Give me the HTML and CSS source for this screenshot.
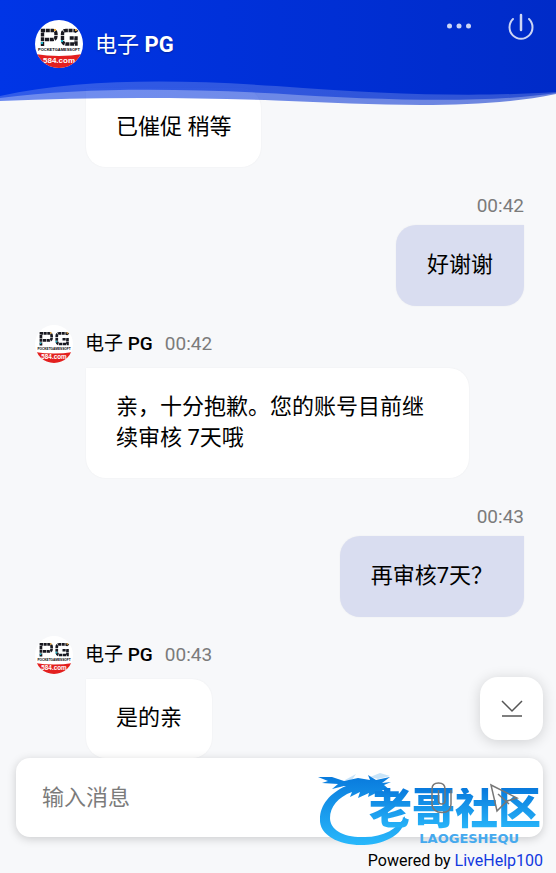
FILE: index.html
```
<!DOCTYPE html>
<html lang="zh-CN">
  <head>
    <meta charset="UTF-8" />
    <meta name="viewport" content="width=device-width, initial-scale=1.0" />
    <title>电子 PG</title>
    <link rel="stylesheet" href="styles.css">
  </head>
  <body>
    <svg class="defs" aria-hidden="true">
      <symbol id="logo" viewBox="0 0 48 48">
        <rect width="48" height="48" fill="#fff" />
        <path d="M0 34Q24 38 48 34V48H0z" fill="#e3201f" />
        <g fill="none" stroke="#181820" stroke-width="3.4" stroke-dasharray="4 0.7">
          <path d="M7.500 26V10.500H18Q21 10.500 21 14V16Q21 19.500 18 19.500H9" />
          <path d="M42 12Q41 10.500 38 10.500H31Q27.500 10.500 27.500 14V20Q27.500 24 31 24H41V18H34" />
        </g>
        <path d="M6 22h2v2H6zM26 20h2v2h-2z" fill="#1cb5c9" />
        <path d="M19 9h2v2h-2zM40 9h2v2h-2z" fill="#e8a43a" />
        <text x="24" y="31" class="logo-tag">POCKETGAMESSOFT</text>
        <text x="24" y="43" class="logo-site">584.com</text>
      </symbol>
    </svg>

    <div class="chat">
      <header class="header">
        <div class="brand">
          <svg class="avatar avatar-big"><use href="#logo" /></svg>
          <h1>电子 <b>PG</b></h1>
        </div>
        <button class="icon-btn" type="button" aria-label="更多">
          <svg width="28" height="28" viewBox="0 0 28 28" fill="currentColor">
            <circle cx="4.500" cy="14" r="2.500" />
            <circle cx="14" cy="14" r="2.500" />
            <circle cx="23.500" cy="14" r="2.500" />
          </svg>
        </button>
        <button class="icon-btn" type="button" aria-label="结束">
          <svg width="28" height="28" viewBox="0 0 28 28" fill="none" stroke="currentColor" stroke-width="2" stroke-linecap="round">
            <path d="M6 7A11.500 11.500 0 1 0 22 7" />
            <path d="M14 3V18" stroke-width="2.500" />
          </svg>
        </button>
        <svg class="wave" viewBox="0 0 556 26" preserveAspectRatio="none" aria-hidden="true">
          <defs>
            <linearGradient id="blue" gradientUnits="userSpaceOnUse" x1="0" y1="0" x2="556" y2="0">
              <stop offset="0" stop-color="#0035e6" />
              <stop offset="1" stop-color="#002bc8" />
            </linearGradient>
          </defs>
          <g fill="url(#blue)">
            <path opacity=".56" d="M0 0H556V14C480 30 380 25 276 20.500C180 17 90 17 0 21z" />
            <path opacity=".56" d="M0 0H556V13C490 23 390 21 276 13.500C170 8 80 8 0 18z" />
            <path d="M0 0H556V12C480 17 390 15 276 6C170 -1 80 -1 0 16z" />
          </g>
        </svg>
      </header>

      <main class="log">
        <div class="msg">
          <p class="bubble">已催促 稍等</p>
        </div>
        <div class="msg mine">
          <time>00:42</time>
          <p class="bubble">好谢谢</p>
        </div>
        <div class="msg">
          <div class="who">
            <svg class="avatar"><use href="#logo" /></svg>
            <span class="name">电子 <b>PG</b></span>
            <time>00:42</time>
          </div>
          <p class="bubble">亲，十分抱歉。您的账号目前继续审核 7天哦</p>
        </div>
        <div class="msg mine">
          <time>00:43</time>
          <p class="bubble">再审核7天？</p>
        </div>
        <div class="msg">
          <div class="who">
            <svg class="avatar"><use href="#logo" /></svg>
            <span class="name">电子 <b>PG</b></span>
            <time>00:43</time>
          </div>
          <p class="bubble">是的亲</p>
        </div>
      </main>

      <form class="composer">
        <input type="text" placeholder="输入消息" aria-label="输入消息" />
        <button class="tool" type="button" aria-label="附件">
          <svg width="32" height="34" viewBox="0 0 32 34">
            <path d="M24 9V23C24 28 21 31.500 15 31.500S5 28 5 23V8C5 4 7.500 2 11.500 2S18 4 18 8V20C18 24 11.500 24 11.500 20V9" />
          </svg>
        </button>
        <button class="tool" type="submit" aria-label="发送">
          <svg width="32" height="34" viewBox="0 0 32 34">
            <path d="M2 4L28 17L18 20L8 30z" />
            <path d="M9 13L20 23" />
          </svg>
        </button>
        <button class="to-bottom" type="button" aria-label="最新消息">
          <svg width="24" height="24" viewBox="0 0 24 24" fill="none" stroke="currentColor" stroke-width="1.500">
            <path d="M2 4L12 14L22 4M2 19H22" />
          </svg>
        </button>
        <div class="stamp">
          <svg width="94" height="80" viewBox="0 0 94 80" aria-hidden="true">
            <defs>
              <linearGradient id="sky" x1="0" y1="0" x2="0" y2="1">
                <stop offset="0" stop-color="#0879dc" />
                <stop offset="1" stop-color="#29b8fb" />
              </linearGradient>
            </defs>
            <path fill="url(#sky)" d="M28 18C12 25 2 37 2 51C1 68 23 78 46 77C69 76 88 65 87 48C80 61 65 69 47 69C26 70 12 62 12 50C12 39 20 29 34 24L32 29L42 24L40 30L51 25L50 29L58 25L68 27L64 22L72 22L66 17L73 14L64 15L72 9L58 12L50 7L52 12L40 10L26 13L14 9L0 9L10 13L4 15L20 16L14 21L26 18z" />
            <path fill="#4aa7ec" d="M27 12L38 6L34 12zM52 9L62 5L72 8L60 11z" opacity=".3" />
          </svg>
          <strong>老哥社区</strong>
          <small>LAOGESHEQU</small>
        </div>
      </form>

      <footer class="footer">Powered by <a href="#">LiveHelp100</a></footer>
    </div>
  </body>
</html>
```
FILE: styles.css
```
* {
  box-sizing: border-box;
  margin: 0;
  padding: 0;
}
body {
  font-family: Roboto, "Noto Sans CJK SC", sans-serif;
  font-size: 22px;
  line-height: 31px;
  color: #000;
  background: #f7f8fa;
}
button {
  border: 0;
  background: none;
  cursor: pointer;
}
svg {
  display: block;
}
.defs {
  position: absolute;
  width: 0;
  height: 0;
}
.chat {
  display: flex;
  flex-direction: column;
  height: 100vh;
}

/* header */
.header {
  position: relative;
  z-index: 1;
  display: flex;
  align-items: flex-start;
  gap: 34px;
  flex: none;
  height: 80px;
  padding: 12px 21px 0 35px;
  color: #fff;
  background: linear-gradient(90deg, #0035e6, #002bc8);
}
.brand {
  display: flex;
  align-items: center;
  gap: 12px;
  margin-top: 8px;
  margin-right: auto;
}
.brand h1 {
  font-size: 22px;
  font-weight: 400;
  text-shadow: 0 1px 2px rgba(0, 0, 0, 0.3);
}
.icon-btn {
  width: 28px;
  height: 28px;
  color: rgba(255, 255, 255, 0.8);
}
.wave {
  position: absolute;
  left: 0;
  top: 100%;
  width: 100%;
  height: 26px;
}
.avatar {
  flex: none;
  width: 38px;
  height: 38px;
  border-radius: 50%;
}
.avatar-big {
  width: 48px;
  height: 48px;
}
.logo-tag,
.logo-site {
  font-family: "Liberation Sans", sans-serif;
  font-size: 4px;
  font-weight: 700;
  text-anchor: middle;
}
.logo-site {
  font-size: 8px;
  fill: #fff;
}

/* messages */
.log {
  display: flex;
  flex-direction: column;
  justify-content: flex-end;
  flex: 1;
  min-height: 0;
  padding: 0 32px 0 35px;
  overflow: hidden;
}
.msg {
  display: flex;
  flex-direction: column;
  align-items: flex-start;
  gap: 5px;
  padding-left: 51px;
}
.mine {
  align-items: flex-end;
  gap: 7px;
  margin: 27px 0 19px;
}
.who {
  display: flex;
  align-items: center;
  gap: 12px;
  margin-left: -51px;
}
.name,
time {
  font-size: 19px;
  line-height: 24px;
}
.name b {
  font-weight: 500;
}
time {
  color: #7b7b7b;
}
.bubble {
  max-width: calc(100% - 55px);
  padding: 23px 30px 25px;
  border-radius: 0 20px 20px 20px;
  background: #fff;
  box-shadow: 0 0 2px rgba(0, 0, 0, 0.05);
}
.mine .bubble {
  padding: 24px 31px 26px;
  border-radius: 20px 0 20px 20px;
  background: #d9ddf0;
}

/* input bar */
.composer {
  position: relative;
  display: flex;
  align-items: center;
  gap: 30px;
  flex: none;
  height: 79px;
  margin: 0 13px 0 16px;
  padding: 0 22px 0 26px;
  border-radius: 14px;
  background: #fff;
  box-shadow: 0 2px 10px rgba(0, 0, 0, 0.18);
}
.composer input {
  flex: 1;
  min-width: 0;
  border: 0;
  outline: 0;
  font: inherit;
  background: none;
}
.composer input::placeholder {
  color: #7b7b7b;
}
.tool {
  position: relative;
  z-index: 1;
}
.tool svg {
  fill: none;
  stroke: #777;
  stroke-width: 1.5;
}
.to-bottom {
  position: absolute;
  right: 0;
  bottom: calc(100% + 18px);
  display: flex;
  align-items: center;
  justify-content: center;
  width: 63px;
  height: 63px;
  border-radius: 18px;
  color: #555;
  background: #fff;
  box-shadow: 0 2px 14px rgba(0, 0, 0, 0.16);
}

/* watermark over the input bar */
.stamp {
  position: absolute;
  right: 2px;
  top: 10px;
  width: 223px;
  height: 80px;
  pointer-events: none;
}
.stamp strong {
  position: absolute;
  right: 0;
  top: 20px;
  font-size: 43px;
  font-weight: 900;
  line-height: 43px;
  color: transparent;
  background: linear-gradient(#0879dc, #29b8fb);
  background-clip: text;
  -webkit-background-clip: text;
}
.stamp small {
  position: absolute;
  right: 22px;
  bottom: 3px;
  font-family: "DejaVu Sans", sans-serif;
  font-size: 13px;
  font-weight: 700;
  line-height: 13px;
  color: #45a9ee;
}

.footer {
  flex: none;
  padding: 13px 13px 1px;
  font-size: 16px;
  line-height: 22px;
  text-align: right;
}
.footer a {
  color: #1238e0;
  text-decoration: none;
}
```
